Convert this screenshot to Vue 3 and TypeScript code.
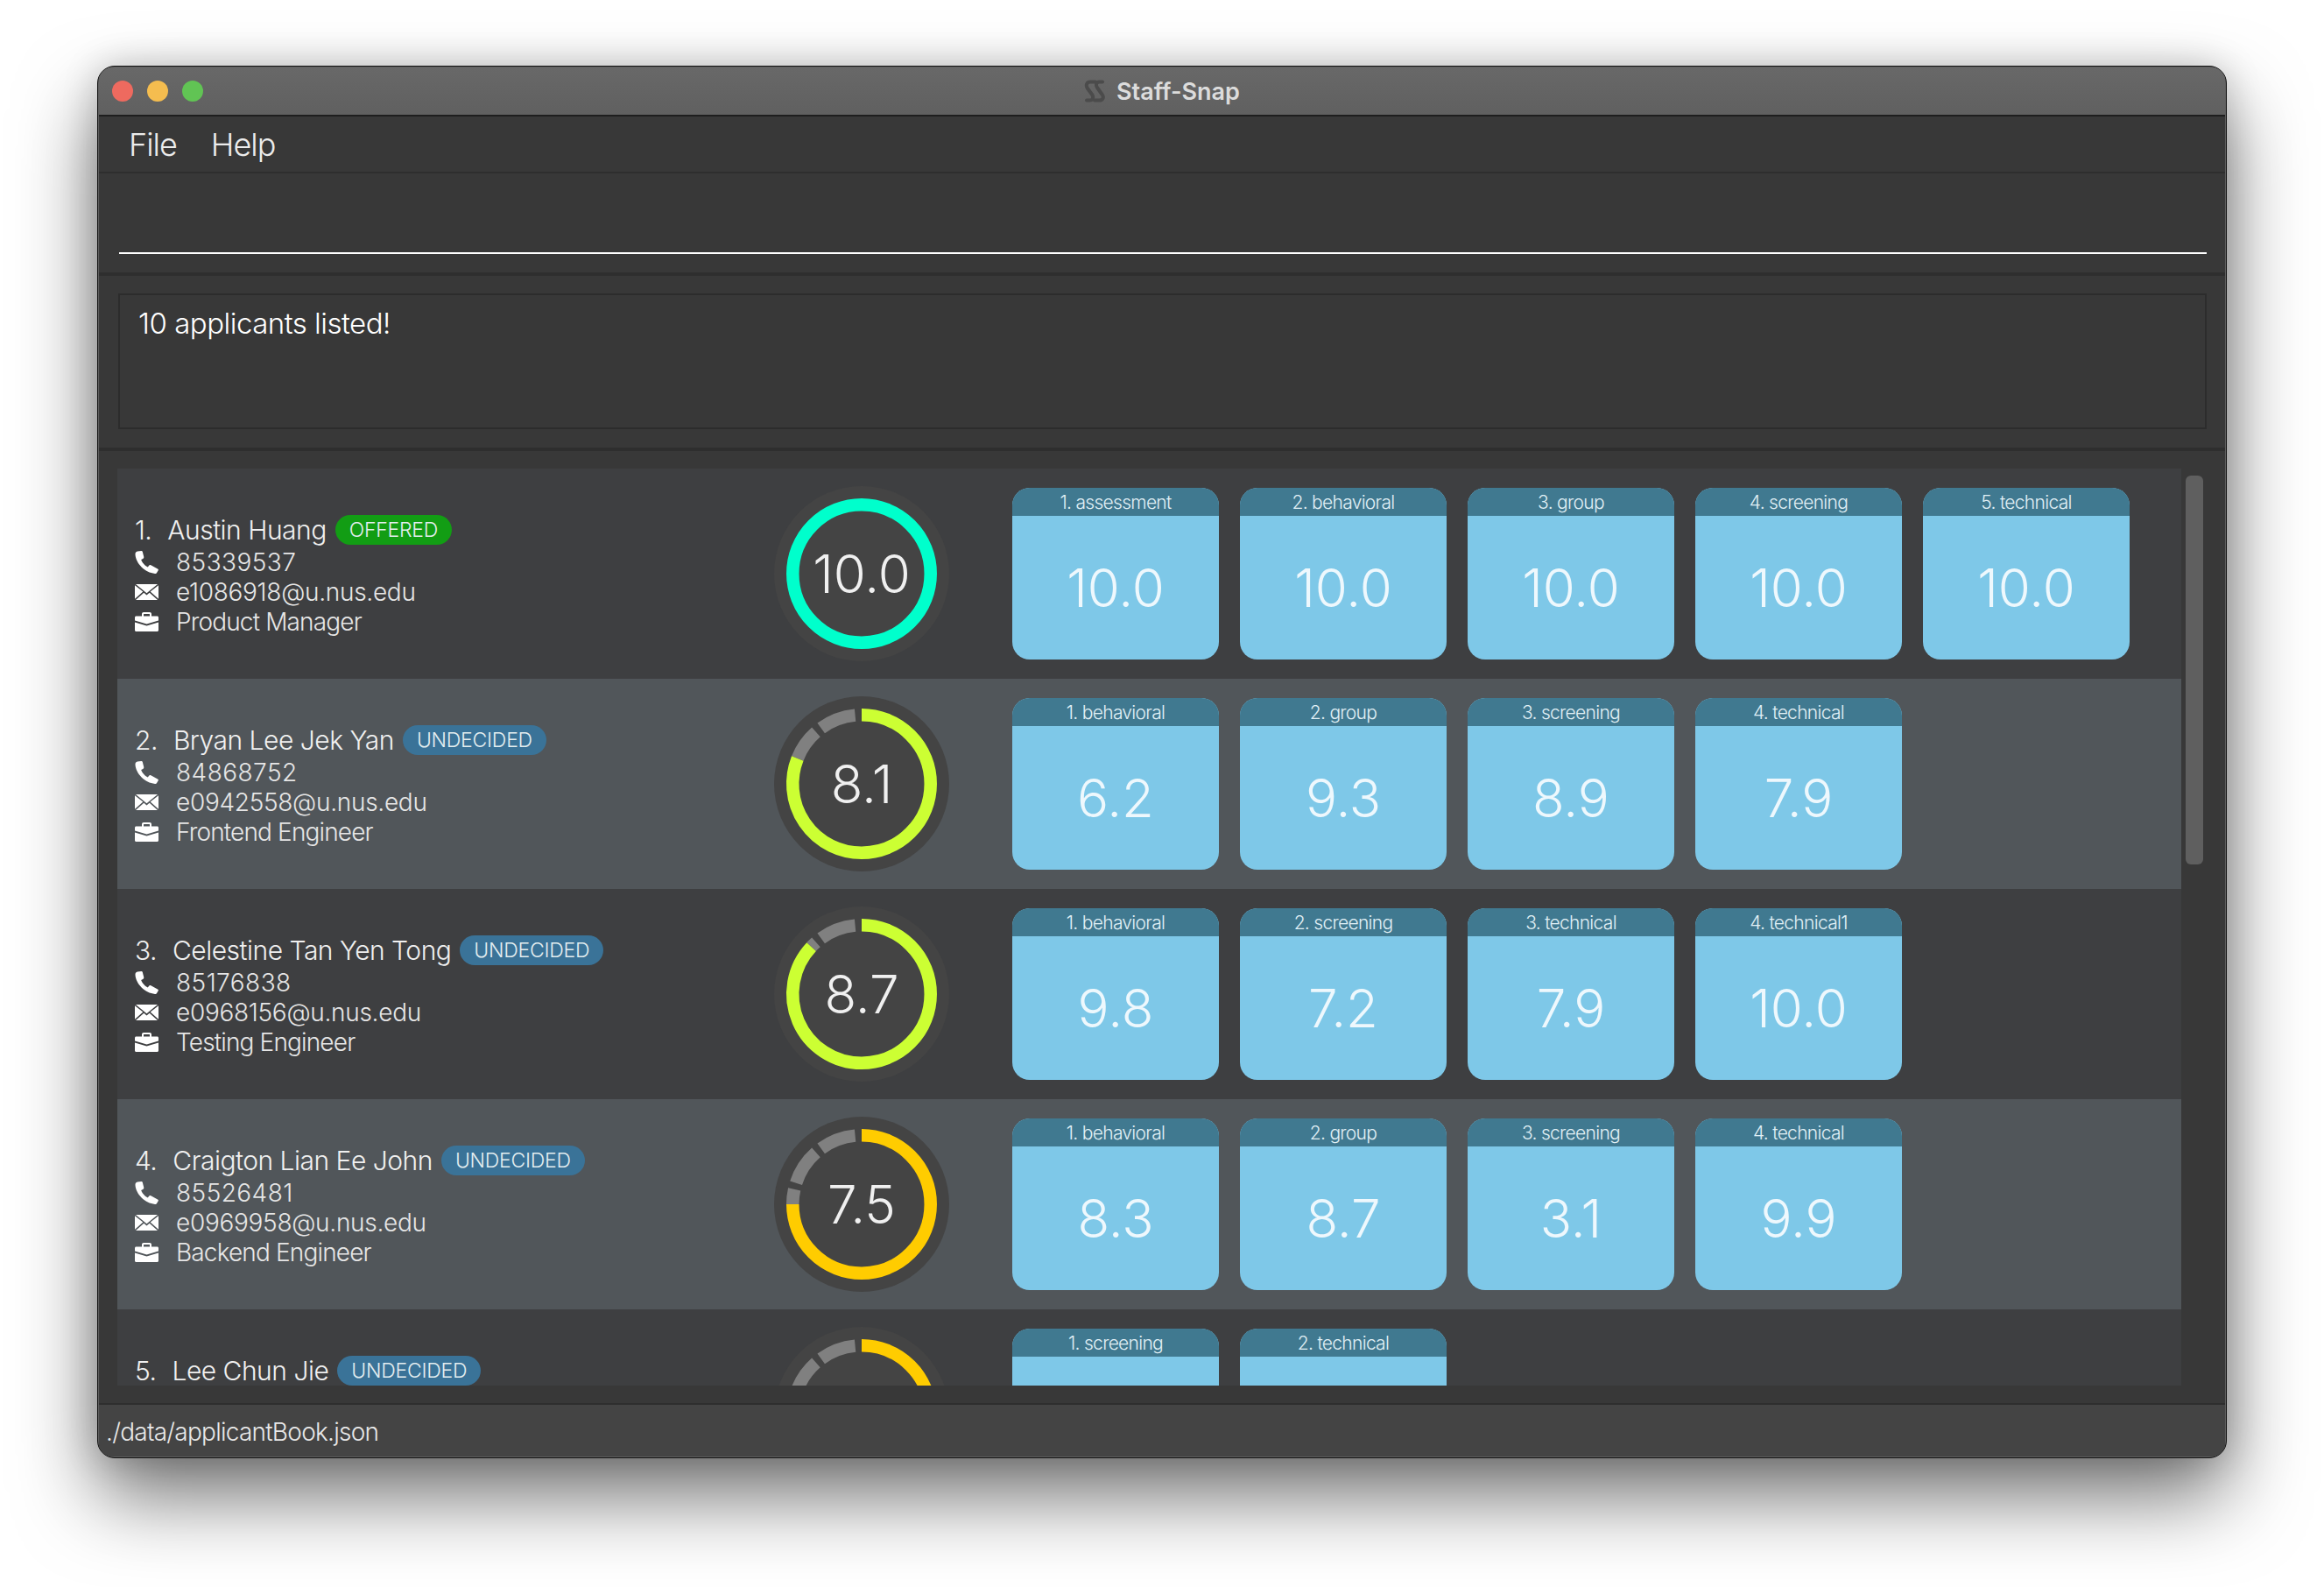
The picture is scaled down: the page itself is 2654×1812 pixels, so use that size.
<script setup lang="ts">
interface Interview {
  name: string
  score: string
}

interface Applicant {
  name: string
  status: 'OFFERED' | 'UNDECIDED'
  phone: string
  email: string
  role: string
  score: number
  color: string
  interviews: Interview[]
}

const applicants: Applicant[] = [
  {
    name: 'Austin Huang',
    status: 'OFFERED',
    phone: '85339537',
    email: 'e1086918@u.nus.edu',
    role: 'Product Manager',
    score: 10,
    color: '#00ffcc',
    interviews: [
      { name: 'assessment', score: '10.0' },
      { name: 'behavioral', score: '10.0' },
      { name: 'group', score: '10.0' },
      { name: 'screening', score: '10.0' },
      { name: 'technical', score: '10.0' },
    ],
  },
  {
    name: 'Bryan Lee Jek Yan',
    status: 'UNDECIDED',
    phone: '84868752',
    email: 'e0942558@u.nus.edu',
    role: 'Frontend Engineer',
    score: 8.1,
    color: '#ccff33',
    interviews: [
      { name: 'behavioral', score: '6.2' },
      { name: 'group', score: '9.3' },
      { name: 'screening', score: '8.9' },
      { name: 'technical', score: '7.9' },
    ],
  },
  {
    name: 'Celestine Tan Yen Tong',
    status: 'UNDECIDED',
    phone: '85176838',
    email: 'e0968156@u.nus.edu',
    role: 'Testing Engineer',
    score: 8.7,
    color: '#ccff33',
    interviews: [
      { name: 'behavioral', score: '9.8' },
      { name: 'screening', score: '7.2' },
      { name: 'technical', score: '7.9' },
      { name: 'technical1', score: '10.0' },
    ],
  },
  {
    name: 'Craigton Lian Ee John',
    status: 'UNDECIDED',
    phone: '85526481',
    email: 'e0969958@u.nus.edu',
    role: 'Backend Engineer',
    score: 7.5,
    color: '#ffcc00',
    interviews: [
      { name: 'behavioral', score: '8.3' },
      { name: 'group', score: '8.7' },
      { name: 'screening', score: '3.1' },
      { name: 'technical', score: '9.9' },
    ],
  },
  {
    name: 'Lee Chun Jie',
    status: 'UNDECIDED',
    phone: '91234567',
    email: 'e0970011@u.nus.edu',
    role: 'Data Engineer',
    score: 6.6,
    color: '#ffcc00',
    interviews: [
      { name: 'screening', score: '6.4' },
      { name: 'technical', score: '6.8' },
    ],
  },
]

const RING_RADIUS = 78.75
const SECTION_DEG = 36
const SECTION_GAP = 5.4

function arc(from: number, to: number): string {
  const point = (deg: number) => {
    const rad = (deg * Math.PI) / 180
    return `${(100 + RING_RADIUS * Math.sin(rad)).toFixed(2)} ${(100 - RING_RADIUS * Math.cos(rad)).toFixed(2)}`
  }
  const large = to - from > 180 ? 1 : 0
  return `M${point(from)} A${RING_RADIUS} ${RING_RADIUS} 0 ${large} 1 ${point(to)}`
}

function valueArcs(score: number): string[] {
  const end = score * SECTION_DEG
  if (end >= 360) return [arc(0, 180), arc(180, 360)]
  if (end > 180) return [arc(0, 180), arc(180, end)]
  return [arc(0, end)]
}

// the unfilled part of the ring is split in ten sections
function restArcs(score: number): string[] {
  const start = score * SECTION_DEG
  const arcs: string[] = []
  for (let i = 0; i < 10; i++) {
    const from = Math.max(i * SECTION_DEG, start)
    const to = (i + 1) * SECTION_DEG - SECTION_GAP
    if (to > from) arcs.push(arc(from, to))
  }
  return arcs
}
</script>

<template>
  <div class="page">
    <div class="window">
      <header class="titlebar">
        <div class="lights">
          <span class="light red"></span>
          <span class="light yellow"></span>
          <span class="light green"></span>
        </div>
        <svg class="logo" viewBox="0 0 24 26" width="24" height="26" fill="none" stroke="#4b4b4b" stroke-width="4" stroke-linecap="round" stroke-linejoin="round">
          <path d="M13 2.500H7C3 2.500 1.500 6.500 4 10L9.500 17.500C11 20 10 23.500 6.500 23.500H3" />
          <path d="M21 2.500H17.500C14 2.500 13 6 15 9L21 17.500C23 20.500 21 23.500 17.500 23.500H12" />
        </svg>
        <span class="app-title">Staff-Snap</span>
      </header>

      <nav class="menubar">
        <span>File</span>
        <span>Help</span>
      </nav>

      <section class="command">
        <div class="command-line"></div>
      </section>

      <section class="result">
        <div class="result-box">10 applicants listed!</div>
      </section>

      <section class="list-pane">
        <div class="list">
          <div
            v-for="(person, index) in applicants"
            :key="person.email"
            class="row"
            :class="{ even: index % 2 === 1 }"
          >
            <div class="info">
              <div class="name-line">
                <span class="name"><span class="index">{{ index + 1 }}.</span>{{ person.name }}</span>
                <span class="badge" :class="person.status.toLowerCase()">{{ person.status }}</span>
              </div>
              <div class="detail">
                <svg class="icon" viewBox="0 0 27 26" width="27" height="26">
                  <path d="M3 .6 7.400.1C8.100 0 8.600.4 8.800 1L10.300 7C10.400 7.900 10 8.400 9.200 8.900L7.200 10C8.200 13.200 11.400 16.900 14.800 18.500L16.300 16.600C16.900 15.900 17.500 15.800 18.300 16.200L26 20.500C26.800 21 27.100 21.600 26.700 22.300L24.900 25.200C24.500 25.900 23.800 26.100 23 25.900 11.600 25 1 14.200.5 4 .4 2.200 1.400.9 3 .6Z" />
                </svg>
                <span class="phone">{{ person.phone }}</span>
              </div>
              <div class="detail">
                <svg class="icon" viewBox="0 0 27 18" width="27" height="18">
                  <path d="M1 0H26L13.500 10.200Z M0 1.300V16.800L9.300 8.500Z M27 1.300V16.800L17.700 8.500Z M1 18H26L16.700 9.800 13.500 12.500 10.300 9.800Z" />
                </svg>
                <span class="email">{{ person.email }}</span>
              </div>
              <div class="detail">
                <svg class="icon" viewBox="0 0 27 22" width="27" height="22">
                  <path d="M8 5V2C8 .9 8.900 0 10 0H17C18.100 0 19 .9 19 2V5H17V2.500C17 2.200 16.800 2 16.500 2H10.500C10.200 2 10 2.200 10 2.500V5Z" />
                  <path d="M1.500 4.500H25.500C26.300 4.500 27 5.200 27 6V9.500L13.500 13.500 0 9.500V6C0 5.200.7 4.500 1.500 4.500Z" />
                  <path d="M0 11.500 13.500 15.500 27 11.500V20.500C27 21.300 26.300 22 25.500 22H1.500C.7 22 0 21.300 0 20.500Z" />
                </svg>
                <span class="role">{{ person.role }}</span>
              </div>
            </div>

            <svg class="gauge" viewBox="0 0 200 200" width="200" height="200">
              <circle cx="100" cy="100" r="100" class="gauge-disc" />
              <path v-for="(d, i) in restArcs(person.score)" :key="'r' + i" :d="d" class="ring" stroke="#808080" />
              <path v-for="(d, i) in valueArcs(person.score)" :key="'v' + i" :d="d" class="ring" :stroke="person.color" />
              <text x="100" y="122" text-anchor="middle" class="gauge-text">{{ person.score.toFixed(1) }}</text>
            </svg>

            <div class="cards">
              <div v-for="(item, i) in person.interviews" :key="item.name" class="card">
                <div class="card-head">{{ i + 1 }}. {{ item.name }}</div>
                <div class="card-score">{{ item.score }}</div>
              </div>
            </div>
          </div>
        </div>
        <div class="scrollbar"></div>
      </section>

      <footer class="status">./data/applicantBook.json</footer>
    </div>
  </div>
</template>

<style>
html,
body {
  background: #fff;
  overflow: hidden;
}
</style>

<style scoped>
.page {
  height: 1812px;
  box-sizing: border-box;
  padding: 75px 111px 0;
  font-family: Inter, "Liberation Sans", sans-serif;
  font-weight: 300;
}

.window {
  width: 2432px;
  height: 1590px;
  box-sizing: border-box;
  display: flex;
  flex-direction: column;
  overflow: hidden;
  padding: 1px;
  background: #5e5e5e;
  border-radius: 20px;
  border: 1px solid #111;
  box-shadow: 0 44px 90px rgba(0, 0, 0, 0.55), 0 0 40px rgba(0, 0, 0, 0.18);
}

.titlebar {
  flex: none;
  height: 56px;
  box-sizing: border-box;
  display: flex;
  align-items: center;
  justify-content: center;
  gap: 13px;
  position: relative;
  background: linear-gradient(#686868, #606060);
  border-bottom: 2px solid #1e1e1e;
}

.lights {
  position: absolute;
  left: 15px;
  top: 15px;
  display: flex;
  gap: 16px;
}

.light {
  width: 24px;
  height: 24px;
  border-radius: 50%;
}

.red {
  background: #ee6a5f;
}

.yellow {
  background: #f5bd4f;
}

.green {
  background: #61c454;
}

.app-title {
  font-size: 27px;
  font-weight: 600;
  color: #dcdcdc;
}

.menubar {
  flex: none;
  height: 65px;
  box-sizing: border-box;
  display: flex;
  align-items: center;
  gap: 39px;
  padding-left: 34px;
  font-size: 36px;
  letter-spacing: -1px;
  color: #ececec;
  background: #383838;
  border-bottom: 2px solid #2e2e2e;
}

.command {
  flex: none;
  height: 117px;
  box-sizing: border-box;
  padding: 90px 21px 0 23px;
  background: #383838;
  border-bottom: 4px solid #2e2e2e;
}

.command-line {
  height: 2px;
  background: #fff;
}

.result {
  flex: none;
  height: 200px;
  box-sizing: border-box;
  padding: 20px 21px 21px 22px;
  background: #383838;
  border-bottom: 4px solid #2e2e2e;
}

.result-box {
  height: 155px;
  box-sizing: border-box;
  padding: 12px 21px;
  border: 2px solid #2c2c2c;
  font-size: 33px;
  line-height: 40px;
  letter-spacing: -0.5px;
  color: #fff;
}

.list-pane {
  flex: 1;
  min-height: 0;
  display: flex;
  padding: 20px 25px 20px 21px;
  background: #383838;
}

.list {
  flex: 1;
  min-width: 0;
  overflow: hidden;
}

.row {
  height: 240px;
  box-sizing: border-box;
  display: flex;
  align-items: center;
  padding-left: 20px;
  background: #3e3f41;
}

.row.even {
  background: #51565a;
}

.info {
  flex: none;
  width: 730px;
  padding-top: 5px;
  color: #e6e6e6;
}

.name-line {
  display: flex;
  align-items: center;
  gap: 10px;
  height: 34px;
  margin-bottom: 3px;
}

.name {
  font-size: 30px;
  letter-spacing: -0.5px;
  color: #f0f0f0;
}

.index {
  margin-right: 18px;
}

.badge {
  height: 34px;
  box-sizing: border-box;
  padding: 0 16px;
  display: flex;
  align-items: center;
  border-radius: 17px;
  font-size: 23px;
  letter-spacing: -0.25px;
  color: #e4eef0;
}

.offered {
  background: #129d14;
}

.undecided {
  background: #3a7398;
}

.detail {
  display: flex;
  align-items: center;
  height: 34px;
  gap: 20px;
  font-size: 28px;
}

.phone {
  letter-spacing: 0.45px;
}

.email {
  letter-spacing: -0.3px;
}

.role {
  letter-spacing: -0.85px;
}

.icon {
  flex: none;
  fill: #fff;
}

.gauge {
  flex: none;
}

.gauge-disc {
  fill: #444;
}

.ring {
  fill: none;
  stroke-width: 14.5;
}

.gauge-text {
  font-size: 60px;
  font-weight: 300;
  fill: #f0f0f0;
}

.cards {
  display: flex;
  gap: 24px;
  margin-left: 72px;
}

.card {
  width: 236px;
  height: 196px;
  display: flex;
  flex-direction: column;
  overflow: hidden;
  border-radius: 20px;
  background: #7ec8e8;
}

.card-head {
  flex: none;
  height: 32px;
  line-height: 33px;
  text-align: center;
  font-size: 21px;
  letter-spacing: -0.7px;
  background: #407990;
  color: #e0f0f6;
}

.card-score {
  flex: 1;
  display: flex;
  align-items: center;
  justify-content: center;
  font-size: 60px;
  color: #eef8fd;
}

.scrollbar {
  flex: none;
  width: 20px;
  height: 444px;
  margin: 8px 0 0 5px;
  border-radius: 6px;
  background: #5f5f5f;
}

.status {
  flex: none;
  height: 61px;
  box-sizing: border-box;
  padding: 3px 0 0 8px;
  display: flex;
  align-items: center;
  font-size: 28px;
  letter-spacing: -0.75px;
  color: #e8e8e8;
  background: #444;
  border-top: 2px solid #2e2e2e;
}
</style>
